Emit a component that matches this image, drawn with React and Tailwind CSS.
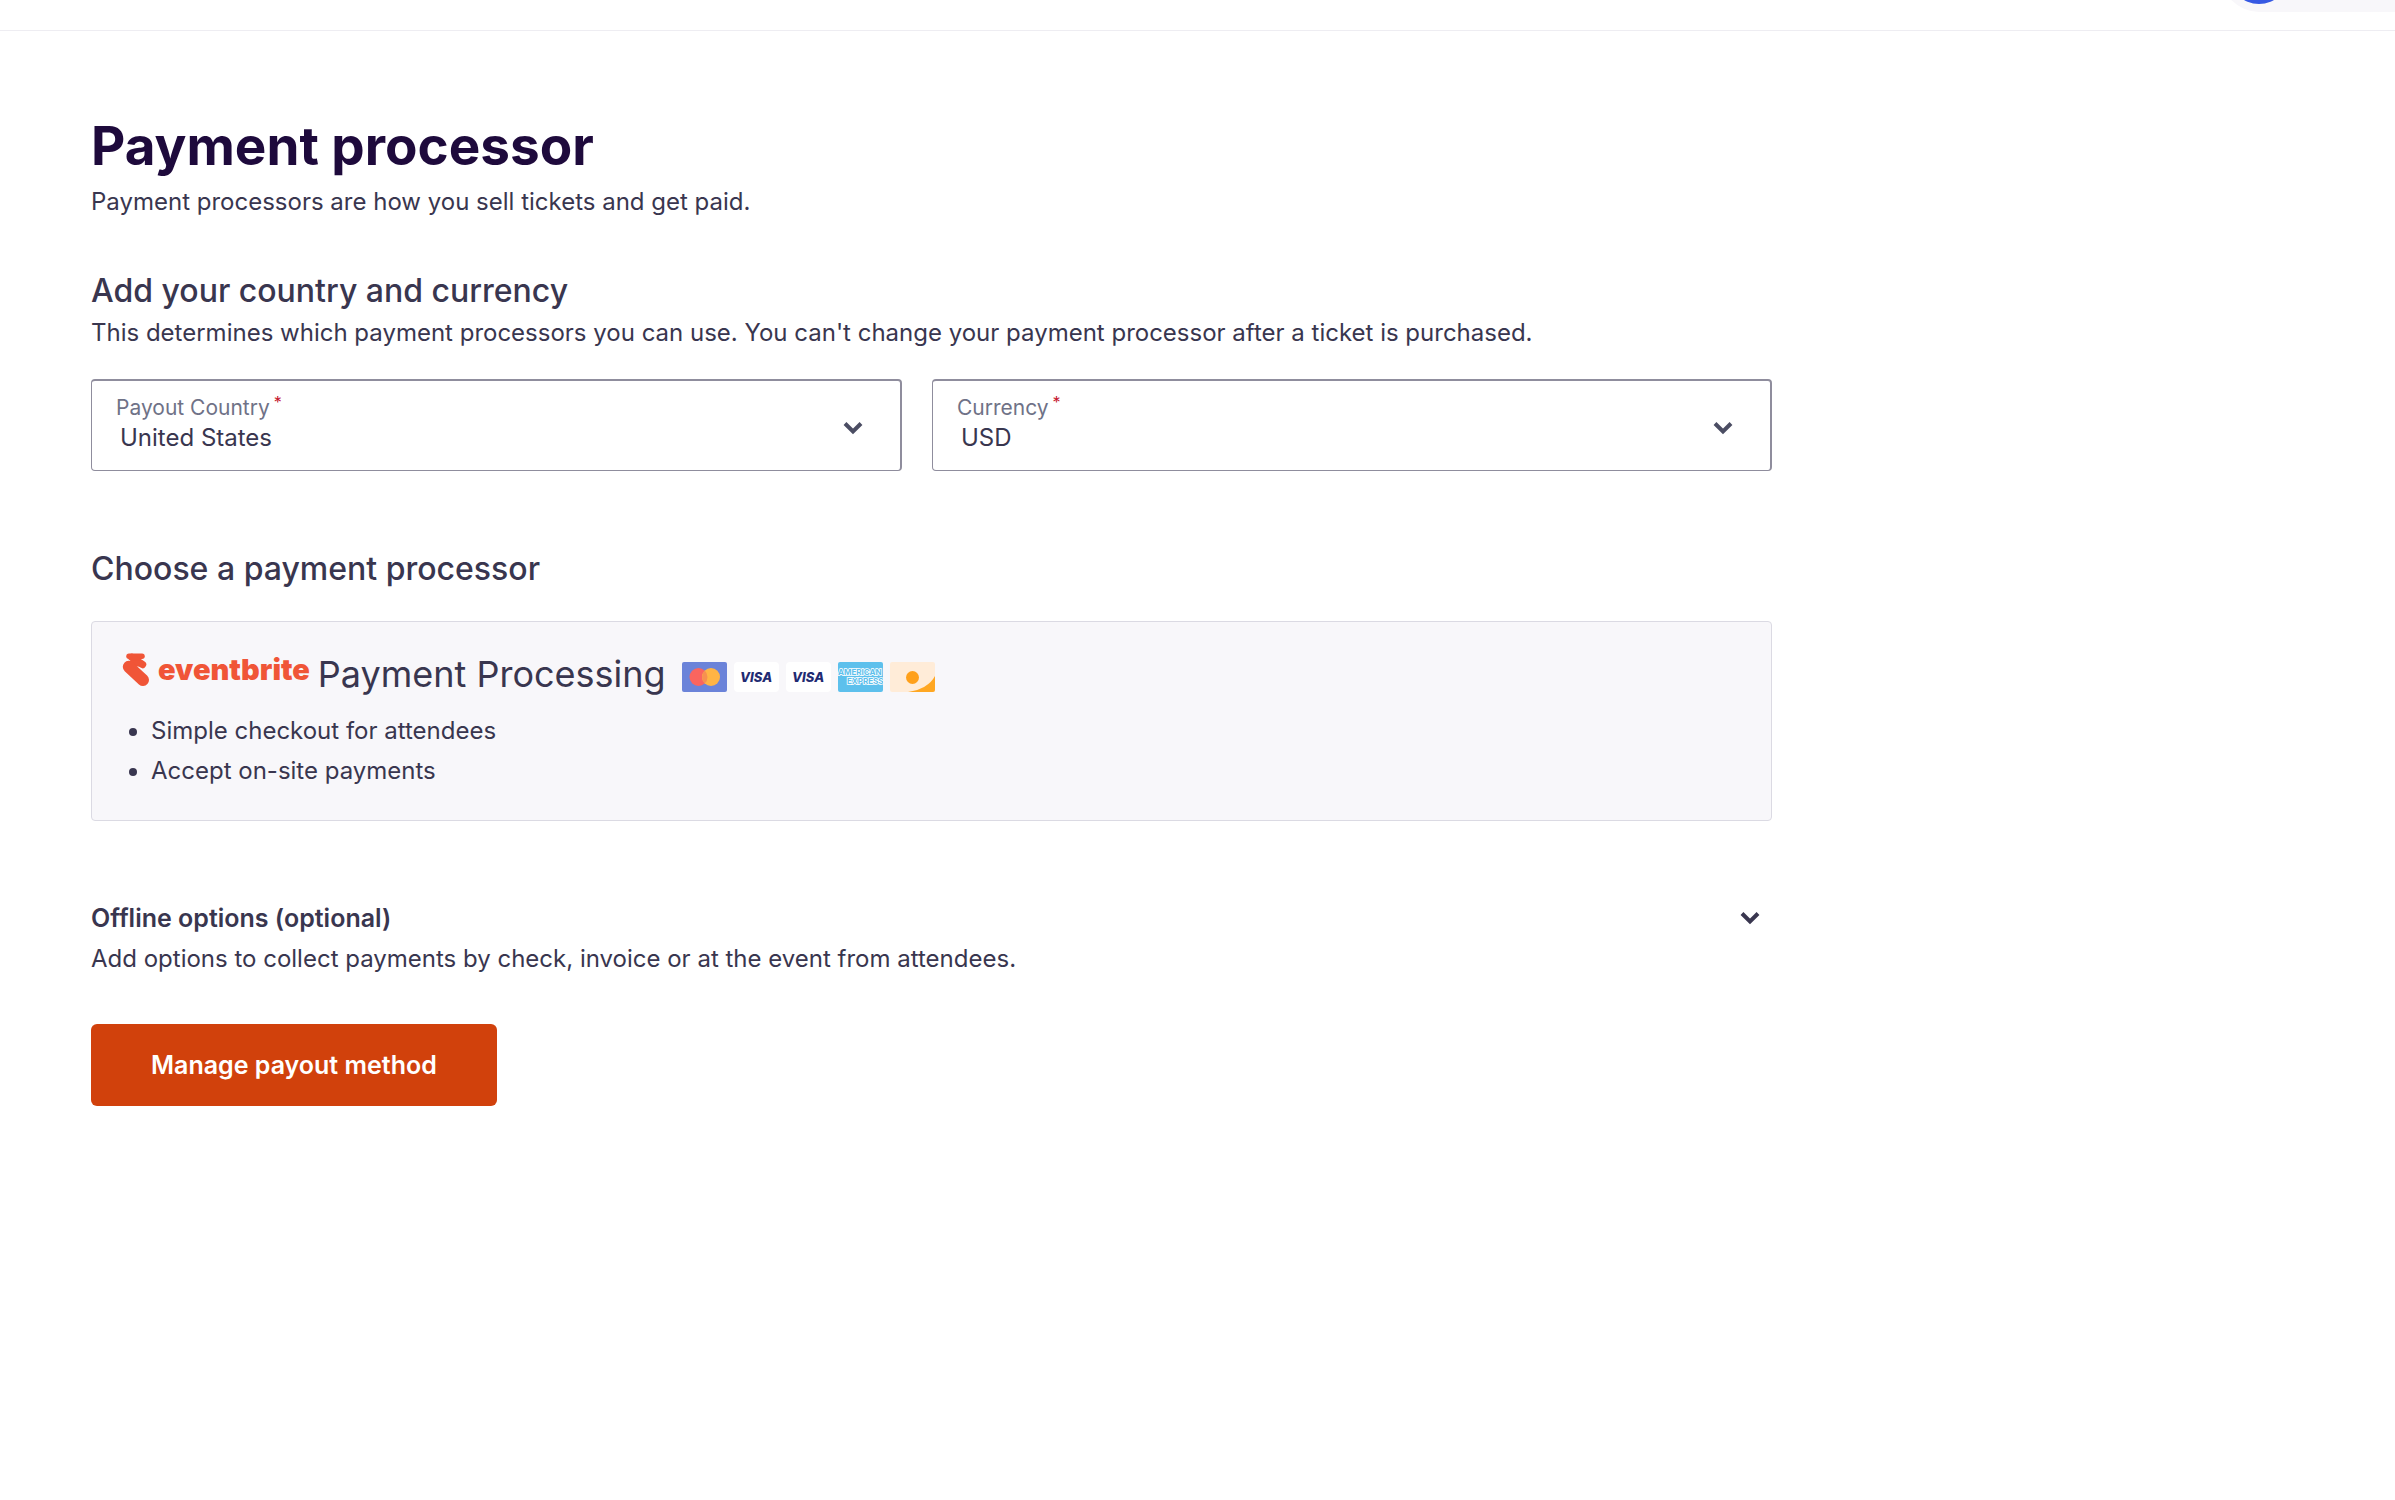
const BODY_TEXT = 'text-2xl leading-[40px]';

function Chevron({ className }) {
  return (
    <svg viewBox="0 0 20 14" aria-hidden="true" className={`h-[14px] w-5 ${className}`}>
      <path d="M2 2.5 L10 10.5 L18 2.5" fill="none" stroke="currentColor" strokeWidth="4" />
    </svg>
  );
}

function SelectField({ id, label, value, className }) {
  return (
    <div className={`relative rounded-sm border border-t-2 border-r-2 border-[#8f8d9d] pt-[13px] pb-4 pl-6 ${className}`}>
      <label htmlFor={id} className="flex items-start text-[21px] leading-7 text-[#6f7287]">
        {label}
        <span className="ml-1 text-base leading-4 text-[#c5162e]">*</span>
      </label>
      <select
        id={id}
        defaultValue={value}
        className="block h-8 w-full appearance-none bg-transparent pl-1 text-2xl leading-8 text-[#39364f] outline-none"
      >
        <option>{value}</option>
      </select>
      <Chevron className="pointer-events-none absolute top-10 right-[37px] text-[#4b4d63]" />
    </div>
  );
}

function EventbriteLogo() {
  return (
    <div className="flex h-10 items-center gap-2 text-[#f05537]">
      <svg viewBox="0 0 28 34" aria-hidden="true" className="h-[34px] w-7" fill="none" stroke="currentColor" strokeLinecap="round">
        <path d="M7 3.300H20" strokeWidth="5.500" />
        <path d="M10 4.500L20.500 11.500" strokeWidth="7.500" />
        <path d="M6.500 13.500L10 10.500H19" strokeWidth="6" />
        <path d="M6.800 13.800L21 27" strokeWidth="12" />
      </svg>
      <span className="text-[29px] leading-8 font-black">eventbrite</span>
    </div>
  );
}

function Mastercard() {
  return (
    <svg viewBox="0 0 45 30" role="img" aria-label="Mastercard" className="h-[30px] w-[45px]">
      <rect width="45" height="30" rx="2" fill="#6b83d9" />
      <circle cx="16.500" cy="15" r="9" fill="#fa655f" />
      <circle cx="29" cy="15" r="9" fill="#ffb445" />
      <path d="M22.750 8.500a9 9 0 0 1 0 13a9 9 0 0 1 0-13z" fill="#f79050" />
    </svg>
  );
}

function Visa() {
  return (
    <div className="flex h-[30px] w-[45px] items-center justify-center rounded-sm bg-white text-[13px] leading-4 font-extrabold text-[#1f2b72] italic">
      VISA
    </div>
  );
}

function Amex() {
  return (
    <svg viewBox="0 0 45 30" role="img" aria-label="American Express" className="h-[30px] w-[45px]">
      <rect width="45" height="30" rx="2" fill="#5dc0ec" />
      <g fill="#5dc0ec" stroke="#ffffff" strokeWidth="1.500" paintOrder="stroke" fontSize="8" fontWeight="700" fontFamily="Inter">
        <text x="0" y="13">AMERICAN</text>
        <text x="9" y="22">EXPRESS</text>
      </g>
    </svg>
  );
}

function Discover() {
  return (
    <svg viewBox="0 0 45 30" role="img" aria-label="Discover" className="h-[30px] w-[45px]">
      <rect width="45" height="30" rx="2" fill="#ffecd8" />
      <path d="M45 14V28Q45 30 43 30H18Q38 27 45 14Z" fill="#ffa722" />
      <circle cx="22.500" cy="15.500" r="6.500" fill="#ffa01a" />
    </svg>
  );
}

export default function App() {
  return (
    <div className="bg-white font-['Inter',sans-serif] text-[#39364f]">
      <header className="flex h-[31px] justify-end overflow-hidden border-b border-[#eeedf2]">
        <div className="-mt-16 flex h-[76px] w-[174px] items-center rounded-l-full bg-[#f8f7fa] pl-2">
          <div className="size-[60px] rounded-full bg-[#3659e3]" />
        </div>
      </header>

      <main className="px-[91px] pt-[83px]">
        <div className="max-w-[1681px]">
          <h1 className="text-[53px] leading-[64px] font-bold text-[#1e0a3c]">Payment processor</h1>
          <p className={`mt-1 ${BODY_TEXT}`}>Payment processors are how you sell tickets and get paid.</p>

          <h2 className="mt-[49px] text-[32px] leading-[40px] font-medium">Add your country and currency</h2>
          <p className={`mt-[2px] ${BODY_TEXT}`}>
            This determines which payment processors you can use. You can't change your payment processor after a ticket is purchased.
          </p>

          <div className="mt-[26px] flex gap-[30px]">
            <SelectField id="payout-country" label="Payout Country" value="United States" className="flex-[27]" />
            <SelectField id="currency" label="Currency" value="USD" className="flex-[28]" />
          </div>

          <h2 className="mt-[78px] text-[32px] leading-[40px] font-medium">Choose a payment processor</h2>
          <section className="mt-8 rounded-sm border border-[#dbdae3] bg-[#f8f7fa] px-[30px] pt-7 pb-[29px]">
            <div className="flex h-12 items-start">
              <EventbriteLogo />
              <h3 className="ml-2 text-4xl leading-[48px]">Payment Processing</h3>
              <div className="mt-3 ml-4 flex gap-[7px]">
                <Mastercard />
                <Visa />
                <Visa />
                <Amex />
                <Discover />
              </div>
            </div>
            <ul className={`mt-[13px] list-disc pl-[29px] ${BODY_TEXT}`}>
              <li>Simple checkout for attendees</li>
              <li>Accept on-site payments</li>
            </ul>
          </section>

          <section className="mt-[77px]">
            <button type="button" aria-expanded="false" className="flex w-full items-center justify-between pr-3 text-[25px] leading-[40px] font-semibold">
              Offline options (optional)
              <Chevron className="" />
            </button>
            <p className={`mt-[1px] ${BODY_TEXT}`}>
              Add options to collect payments by check, invoice or at the event from attendees.
            </p>
          </section>

          <button type="button" className="mt-[45px] h-[82px] rounded-md bg-[#d1410c] px-[60px] text-[25px] leading-8 font-semibold text-white">
            Manage payout method
          </button>
        </div>
      </main>
    </div>
  );
}
